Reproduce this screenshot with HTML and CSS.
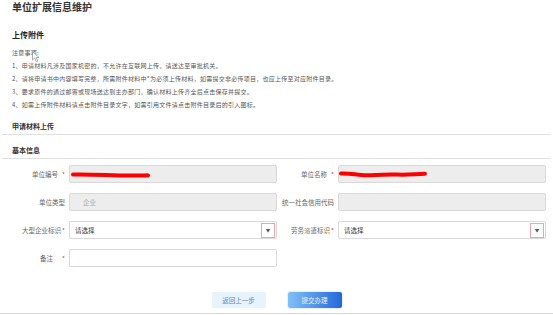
FILE: index.html
```html
<!DOCTYPE html>
<html lang="zh-CN">
<head>
<meta charset="UTF-8">
<title>单位扩展信息维护</title>
<link rel="stylesheet" href="styles.css">
</head>
<body>
<div class="page">
<h1 class="page-title">单位扩展信息维护</h1>
<h2 class="sec-title">上传附件</h2>
<div class="notice">
<p>注意事项:</p>
<p>1、申请材料凡涉及国家机密的，不允许在互联网上传，请送达至审批机关。</p>
<p>2、请将申请书中内容填写完整，所需附件材料中*为必须上传材料，如需提交非必传项目，也应上传至对应附件目录。</p>
<p>3、要求原件的通过邮寄或现场送达到主办部门，确认材料上传齐全后点击保存并提交。</p>
<p>4、如需上传附件材料请点击附件目录文字，如需引用文件请点击附件目录后的引入图标。</p>
</div>
<h3 class="bar-title">申请材料上传</h3>
<h3 class="bar-title">基本信息</h3>
<div class="form-grid">
<label class="fl">单位编号<i>*</i></label>
<div class="field">
<div class="ipt"></div>
<svg class="scribble scribble-l" width="80" height="8" viewBox="0 0 80 8"><path d="M2 3.5 C20 3 40 4.5 58 4.6 S74 4.2 77 4.4" stroke="#f00" stroke-width="4" fill="none" stroke-linecap="round"/></svg>
</div>
<label class="fl">单位名称<i>*</i></label>
<div class="field">
<div class="ipt"></div>
<svg class="scribble scribble-r" width="90" height="9" viewBox="0 0 90 9"><path d="M2 3.5 C10 2.8 18 5 28 5.2 C40 5.6 48 4 58 4.6 C68 5.2 76 4 86 3.8" stroke="#f00" stroke-width="4" fill="none" stroke-linecap="round"/></svg>
</div>
<label class="fl">单位类型</label>
<div class="field"><div class="ipt">企业</div></div>
<label class="fl">统一社会信用代码</label>
<div class="field"><div class="ipt"></div></div>
<label class="fl">大型企业标识<i class="tight">*</i></label>
<div class="field"><div class="ipt sel">请选择<span class="arrow">▼</span></div></div>
<label class="fl">劳务派遣标识<i class="tight">*</i></label>
<div class="field"><div class="ipt sel">请选择<span class="arrow">▼</span></div></div>
<label class="fl">备注<i class="wide">*</i></label>
<div class="field"><div class="ipt blank"></div></div>
</div>
<div class="btn-area">
<button type="button" class="btn btn-back">返回上一步</button>
<button type="button" class="btn btn-submit">提交办理</button>
</div>
<div class="bottom-line"></div>
</div>
<svg class="cursor" width="8" height="12" viewBox="0 0 8 12"><path d="M0.5 0.5 L0.5 9 L2.7 7 L4.4 10.8 L5.8 10.2 L4.1 6.5 L7 6.5 Z" fill="#fff" stroke="#777" stroke-width="0.6"/></svg>
</body>
</html>
```
FILE: styles.css
```css
html, body { margin: 0; padding: 0; }
body { width: 553px; height: 315px; overflow: hidden; position: relative; background: #fff; color: #333; font-family: "Noto Sans CJK SC", "Noto Sans", sans-serif; }
.page { padding: 0 2px; }
.page-title { margin: 0; padding-left: 10px; font-size: 10px; line-height: 14px; font-weight: bold; color: #333; }
.sec-title { margin: 14.5px 0 0; padding-left: 10px; font-size: 8px; line-height: 12px; font-weight: bold; color: #222; }
.notice { margin-top: 5.5px; padding-left: 10px; font-size: 6px; letter-spacing: 0.25px; line-height: 13px; color: #555; }
.notice p { margin: 0; }
.bar-title { margin: 9px 0 0; padding: 0 0 2px 10px; font-size: 7px; line-height: 12px; font-weight: bold; color: #333; border-bottom: 1px solid #e0e0e0; }
.form-grid { display: grid; grid-template-columns: 67px 208px 61px 208px; row-gap: 10px; margin-top: 6px; }
.fl { display: flex; justify-content: flex-end; align-items: center; height: 18px; padding-right: 4px; font-size: 6.5px; color: #666; white-space: nowrap; }
.fl i { font-style: normal; color: #e33; margin-left: 4px; }
.fl i.tight { margin-left: 1px; }
.fl i.wide { margin-left: 9px; }
.field { position: relative; }
.ipt { box-sizing: border-box; height: 18px; display: flex; align-items: center; padding-left: 13px; border: 1px solid #d9d9d9; border-radius: 2px; background: #ededed; font-size: 6.5px; color: #aaa; }
.ipt.sel { background: #fff; color: #333; padding-left: 5px; justify-content: space-between; }
.ipt.blank { background: #fff; }
.arrow { box-sizing: border-box; width: 14px; height: 15px; margin-right: 1px; display: flex; align-items: center; justify-content: center; border: 1px solid #f2a3a3; font-size: 4.5px; color: #555; }
.scribble { position: absolute; }
.scribble-l { left: 2px; top: 6px; }
.scribble-r { left: 1px; top: 5px; }
.btn-area { display: flex; justify-content: center; gap: 22px; margin-top: 25px; }
.btn { width: 54px; height: 16px; padding: 0; border: none; border-radius: 2px; font-family: inherit; font-size: 6.5px; }
.btn-back { background: #e7f3fd; color: #5a84c9; }
.btn-submit { background: linear-gradient(90deg, #82c0f8, #2468d8); color: #eef4ff; box-shadow: 0 0 2px rgba(40, 100, 200, .35); }
.bottom-line { margin: 5px -2px 0; border-top: 1px solid #d6d6d6; }
.cursor { position: absolute; left: 32px; top: 51px; }
```
